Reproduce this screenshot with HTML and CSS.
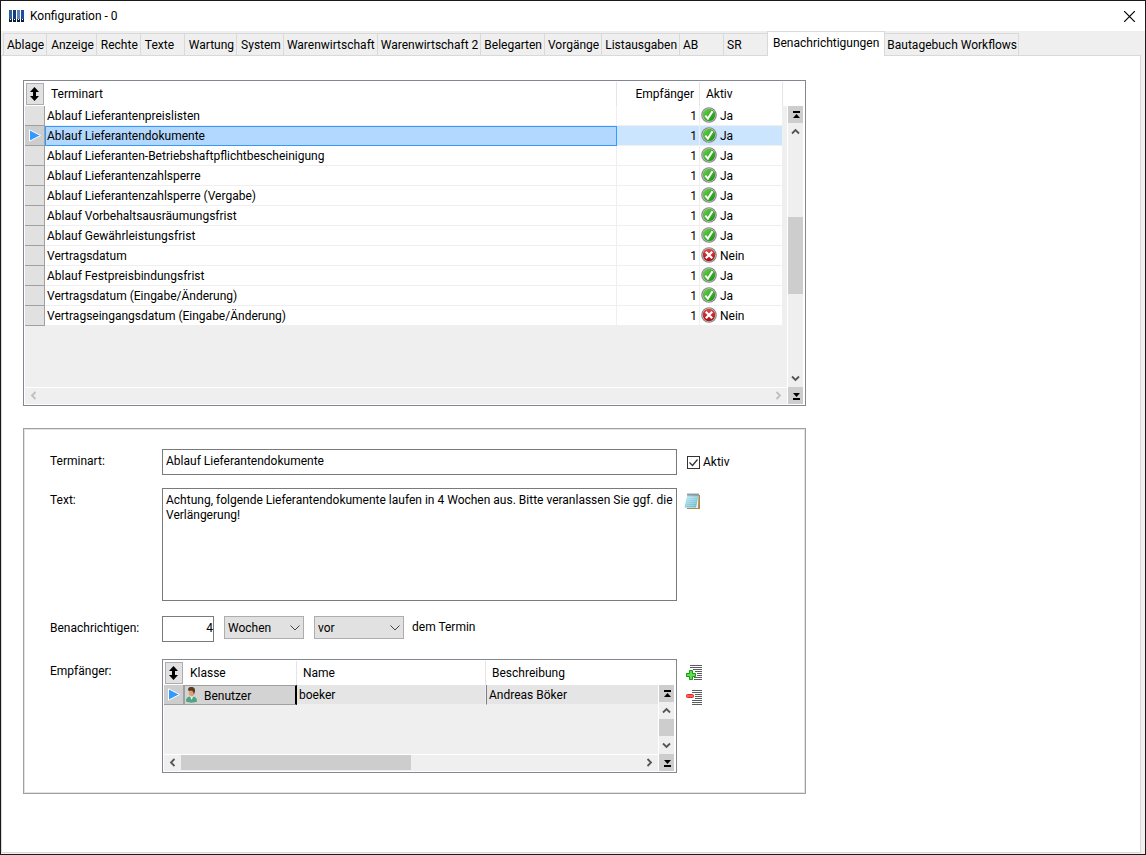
FILE: index.html
```
<!DOCTYPE html>
<html lang="de">
<head>
    <meta charset="UTF-8">
    <meta name="viewport" content="width=device-width, initial-scale=1.0">
    <title>Konfiguration - 0</title>
    <link rel="stylesheet" href="styles.css">
</head>
<body>
    <!-- Symbole -->
    <svg class="symbols" aria-hidden="true">
        <defs>
            <linearGradient id="g-green" x1="0" y1="0" x2="1" y2="1">
                <stop offset="0" stop-color="#6fd24f"/>
                <stop offset="1" stop-color="#15900f"/>
            </linearGradient>
            <linearGradient id="g-red" x1="0" y1="0" x2="0" y2="1">
                <stop offset="0" stop-color="#e04a4a"/>
                <stop offset="1" stop-color="#a80d14"/>
            </linearGradient>
            <linearGradient id="g-pad" x1="0" y1="0" x2="1" y2="1">
                <stop offset="0" stop-color="#c4eaf3"/>
                <stop offset="1" stop-color="#5fb4cd"/>
            </linearGradient>
        </defs>
        <symbol id="i-ok" viewBox="0 0 16 16">
            <circle cx="8" cy="8" r="7.8" fill="#858585"/>
            <circle cx="8" cy="8" r="6.7" fill="#d2d2d2"/>
            <circle cx="8" cy="8" r="6.2" fill="url(#g-green)"/>
            <path d="M4.3 8.6l2.6 3 4.600-7.400" fill="none" stroke="#fff" stroke-width="2"/>
        </symbol>
        <symbol id="i-no" viewBox="0 0 16 16">
            <circle cx="8" cy="8" r="7.8" fill="#858585"/>
            <circle cx="8" cy="8" r="6.7" fill="#d2d2d2"/>
            <circle cx="8" cy="8" r="6.2" fill="url(#g-red)"/>
            <path d="M4.8 4.800l6.400 6.400M11.200 4.800l-6.400 6.400" fill="none" stroke="#fff" stroke-width="2.3"/>
        </symbol>
        <symbol id="i-sort" viewBox="0 0 10 14">
            <path d="M4.500 0L9 5H6v4h3l-4.500 5L0 9h3V5H0z" fill="#000"/>
        </symbol>
        <symbol id="i-current" viewBox="0 0 13 13">
            <path d="M1.500.8v11.400L12.500 6.500z" fill="#3399ff" stroke="#fff"/>
        </symbol>
        <symbol id="i-up" viewBox="0 0 9 9"><path d="M1 6.500l3.500-3.500L8 6.500" fill="none" stroke="currentColor" stroke-width="1.8"/></symbol>
        <symbol id="i-down" viewBox="0 0 9 9"><path d="M1 2.500L4.500 6 8 2.500" fill="none" stroke="currentColor" stroke-width="1.8"/></symbol>
        <symbol id="i-left" viewBox="0 0 9 9"><path d="M6.500 1L3 4.500 6.500 8" fill="none" stroke="currentColor" stroke-width="1.8"/></symbol>
        <symbol id="i-right" viewBox="0 0 9 9"><path d="M2.500 1L6 4.500 2.500 8" fill="none" stroke="currentColor" stroke-width="1.8"/></symbol>
        <symbol id="i-first" viewBox="0 0 9 9"><path d="M2 1h7v2H2zM5.500 4L9 8H2z" fill="#000"/></symbol>
        <symbol id="i-last" viewBox="0 0 9 9"><path d="M2 7h7v2H2zM5.500 6L9 2H2z" fill="#000"/></symbol>
    </svg>

    <div class="window">
        <header class="titlebar">
            <svg class="app-icon" viewBox="0 0 16 12">
                <path d="M0 0h3v12H0z" fill="#2c5f9e"/>
                <path d="M4 0h3v12H4z" fill="#17397f"/>
                <path d="M8 0h3v12H8z" fill="#5b83bd"/>
                <path d="M12 0h3v12h-3z" fill="#1c4fa0"/>
                <path d="M0 9h3v3H0zM4 9h3v3H4zM8 9h3v3H8zM12 9h3v3h-3z" fill="#0d1b33"/>
                <path d="M1 9h1v1H1zM5 9h1v1H5zM9 9h1v1H9zM13 9h1v1h-1z" fill="#fff"/>
            </svg>
            <h1>Konfiguration - 0</h1>
            <button class="close" aria-label="Schließen">
                <svg viewBox="0 0 10 10"><path d="M0 0l10 10M10 0L0 10" stroke="#000" stroke-width="1.1"/></svg>
            </button>
        </header>

        <nav class="tabs">
            <button>Ablage</button>
            <button>Anzeige</button>
            <button>Rechte</button>
            <button>Texte</button>
            <button>Wartung</button>
            <button>System</button>
            <button>Warenwirtschaft</button>
            <button>Warenwirtschaft 2</button>
            <button>Belegarten</button>
            <button>Vorgänge</button>
            <button>Listausgaben</button>
            <button>AB</button>
            <button>SR</button>
            <button class="active">Benachrichtigungen</button>
            <button>Bautagebuch Workflows</button>
        </nav>

        <main class="page">
            <!-- Liste der Terminarten -->
            <section class="grid">
                <div class="grid-body">
                    <table class="dates">
                        <colgroup><col class="c-mark"><col><col class="c-count"><col class="c-active"></colgroup>
                        <thead>
                            <tr>
                                <th class="mark"><button aria-label="Sortierung"><svg><use href="#i-sort"/></svg></button></th>
                                <th>Terminart</th>
                                <th class="num">Empfänger</th>
                                <th>Aktiv</th>
                            </tr>
                        </thead>
                        <tbody>
                            <tr><td class="mark"></td><td>Ablauf Lieferantenpreislisten</td><td class="num">1</td><td class="flag"><svg class="state"><use href="#i-ok"/></svg>Ja</td></tr>
                            <tr class="selected"><td class="mark"><svg><use href="#i-current"/></svg></td><td class="focus">Ablauf Lieferantendokumente</td><td class="num">1</td><td class="flag"><svg class="state"><use href="#i-ok"/></svg>Ja</td></tr>
                            <tr><td class="mark"></td><td>Ablauf Lieferanten-Betriebshaftpflichtbescheinigung</td><td class="num">1</td><td class="flag"><svg class="state"><use href="#i-ok"/></svg>Ja</td></tr>
                            <tr><td class="mark"></td><td>Ablauf Lieferantenzahlsperre</td><td class="num">1</td><td class="flag"><svg class="state"><use href="#i-ok"/></svg>Ja</td></tr>
                            <tr><td class="mark"></td><td>Ablauf Lieferantenzahlsperre (Vergabe)</td><td class="num">1</td><td class="flag"><svg class="state"><use href="#i-ok"/></svg>Ja</td></tr>
                            <tr><td class="mark"></td><td>Ablauf Vorbehaltsausräumungsfrist</td><td class="num">1</td><td class="flag"><svg class="state"><use href="#i-ok"/></svg>Ja</td></tr>
                            <tr><td class="mark"></td><td>Ablauf Gewährleistungsfrist</td><td class="num">1</td><td class="flag"><svg class="state"><use href="#i-ok"/></svg>Ja</td></tr>
                            <tr><td class="mark"></td><td>Vertragsdatum</td><td class="num">1</td><td class="flag"><svg class="state"><use href="#i-no"/></svg>Nein</td></tr>
                            <tr><td class="mark"></td><td>Ablauf Festpreisbindungsfrist</td><td class="num">1</td><td class="flag"><svg class="state"><use href="#i-ok"/></svg>Ja</td></tr>
                            <tr><td class="mark"></td><td>Vertragsdatum (Eingabe/Änderung)</td><td class="num">1</td><td class="flag"><svg class="state"><use href="#i-ok"/></svg>Ja</td></tr>
                            <tr><td class="mark"></td><td>Vertragseingangsdatum (Eingabe/Änderung)</td><td class="num">1</td><td class="flag"><svg class="state"><use href="#i-no"/></svg>Nein</td></tr>
                        </tbody>
                    </table>
                </div>
                <div class="hscroll disabled">
                    <button aria-label="Links"><svg><use href="#i-left"/></svg></button>
                    <div class="track"></div>
                    <button aria-label="Rechts"><svg><use href="#i-right"/></svg></button>
                </div>
                <div class="vscroll">
                    <button class="end" aria-label="Anfang"><svg><use href="#i-first"/></svg></button>
                    <button aria-label="Hoch"><svg><use href="#i-up"/></svg></button>
                    <div class="track track-dates"><div class="thumb"></div></div>
                    <button aria-label="Runter"><svg><use href="#i-down"/></svg></button>
                    <button class="end" aria-label="Ende"><svg><use href="#i-last"/></svg></button>
                </div>
            </section>

            <!-- Details -->
            <form class="details">
                <label for="kind">Terminart:</label>
                <input type="text" id="kind" value="Ablauf Lieferantendokumente">
                <div class="side">
                    <label class="check"><input type="checkbox" checked>Aktiv</label>
                </div>

                <label for="text">Text:</label>
                <textarea id="text">Achtung, folgende Lieferantendokumente laufen in 4 Wochen aus. Bitte veranlassen Sie ggf. die Verlängerung!</textarea>
                <div class="side">
                    <button type="button" aria-label="Text bearbeiten">
                        <svg viewBox="0 0 16 17">
                            <path d="M4 2h12v14H3z" fill="#a68b52"/>
                            <path d="M4 2h10.500L14 15H3z" fill="#f5f0dd"/>
                            <path d="M3.500 1.500H14.500L12 14.500H.5z" fill="url(#g-pad)"/>
                            <path d="M3.500 4.500h9.500M3 6.500h9.500M2.700 8.500h9.500M2.300 10.500h9.500M2 12.500h9.500" stroke="#fff" stroke-opacity=".35" stroke-width=".7"/>
                            <path d="M4 .5v2M6 .5v2M8 .5v2M10 .5v2M12 .5v2M14 .5v2" stroke="#333" stroke-width=".9"/>
                        </svg>
                    </button>
                </div>

                <label for="amount">Benachrichtigen:</label>
                <div class="notify">
                    <input type="text" id="amount" value="4">
                    <select class="unit" aria-label="Einheit"><option>Wochen</option></select>
                    <select class="relation" aria-label="Bezug"><option>vor</option></select>
                    <span>dem Termin</span>
                </div>
                <div class="side"></div>

                <span class="label">Empfänger:</span>
                <div class="grid">
                    <div class="grid-body">
                        <table class="users">
                            <colgroup><col class="c-mark"><col class="c-class"><col class="c-name"><col></colgroup>
                            <thead>
                                <tr>
                                    <th class="mark"><button type="button" aria-label="Sortierung"><svg><use href="#i-sort"/></svg></button></th>
                                    <th>Klasse</th>
                                    <th>Name</th>
                                    <th>Beschreibung</th>
                                </tr>
                            </thead>
                            <tbody>
                                <tr>
                                    <td class="mark"><svg><use href="#i-current"/></svg></td>
                                    <td class="class-cell">
                                        <svg class="state" viewBox="0 0 16 16">
                                            <path d="M1 14.500c0-3 1-4.500 4-5h3c3 .5 4 2 4 5-3 1.500-8 1.500-11 0z" fill="#4fa583"/>
                                            <path d="M5 9l1.500 4L8.500 9z" fill="#e9f4ef"/>
                                            <path d="M3.500 2.500h5.500v5L7.500 9.500H6L4 7.500z" fill="#d9a273"/>
                                            <path d="M3 3C3 .5 4.500 0 6.500 0s4 1 3.500 4.500L9 7.500 8 4.500 6 3.500 4 4z" fill="#5a3a22"/>
                                        </svg>Benutzer
                                    </td>
                                    <td>boeker</td>
                                    <td class="descr">Andreas Böker</td>
                                </tr>
                            </tbody>
                        </table>
                    </div>
                    <div class="hscroll">
                        <button type="button" aria-label="Links"><svg><use href="#i-left"/></svg></button>
                        <div class="track"><div class="thumb"></div></div>
                        <button type="button" aria-label="Rechts"><svg><use href="#i-right"/></svg></button>
                    </div>
                    <div class="vscroll">
                        <button type="button" class="end" aria-label="Anfang"><svg><use href="#i-first"/></svg></button>
                        <button type="button" aria-label="Hoch"><svg><use href="#i-up"/></svg></button>
                        <div class="track"><div class="thumb"></div></div>
                        <button type="button" aria-label="Runter"><svg><use href="#i-down"/></svg></button>
                        <button type="button" class="end" aria-label="Ende"><svg><use href="#i-last"/></svg></button>
                    </div>
                </div>
                <div class="side side-list">
                    <button type="button" aria-label="Empfänger hinzufügen">
                        <svg viewBox="0 0 16 17">
                            <path d="M4 1.500h12M4 3.500h12M7 5.500h9M9 7.500h7M11 9.500h5M11 11.500h5M8 13.500h8M8 15.500h8" stroke="#5c5c5c"/>
                            <path d="M3.500 6.500h3v3h3v3h-3v3h-3v-3h-3v-3h3z" fill="#5fe04a" stroke="#17981a"/>
                        </svg>
                    </button>
                    <button type="button" aria-label="Empfänger entfernen">
                        <svg viewBox="0 0 16 17">
                            <path d="M6 1.500h10M6 3.500h10M9 5.500h7M9 7.500h7M9 9.500h7M6 11.500h10M6 13.500h10M6 15.500h10" stroke="#5c5c5c"/>
                            <rect x=".5" y="5.500" width="7" height="3" rx="1" fill="#ff5a50" stroke="#e02828"/>
                        </svg>
                    </button>
                </div>
            </form>
        </main>
    </div>
</body>
</html>
```
FILE: styles.css
```
* {
    box-sizing: border-box;
}

body {
    margin: 0;
    font-family: Roboto, "Noto Sans", sans-serif;
    font-size: 12px;
    line-height: 15px;
    color: #000;
}

button, input, select, textarea {
    font: inherit;
    color: inherit;
    margin: 0;
    border-radius: 0;
    outline: none;
}

button {
    display: block;
    padding: 0;
    border: none;
    background: none;
}

svg {
    display: block;
}

.symbols {
    position: absolute;
    width: 0;
    height: 0;
}

.window {
    display: flex;
    flex-direction: column;
    min-height: 100vh;
    border: 1px solid #1a1a1a;
    background-color: #efefef;
}

/* Titelleiste */
.titlebar {
    display: flex;
    align-items: center;
    height: 30px;
    padding: 0 10px 0 8px;
    background-color: #fff;
}

.titlebar h1 {
    flex: 1;
    margin: 0 0 0 5px;
    font-size: 12px;
    font-weight: normal;
}

.app-icon {
    width: 16px;
    height: 12px;
}

.close svg {
    width: 11px;
    height: 11px;
}

/* Reiter */
.tabs {
    display: flex;
    align-items: flex-end;
    height: 24px;
    padding-left: 2px;
}

.tabs button {
    min-width: 44px;
    height: 22px;
    padding: 1px 2px 0 4px;
    border: 1px solid #d9d9d9;
    border-width: 1px 1px 0 0;
    text-align: left;
    white-space: nowrap;
}

.tabs button:nth-child(n+7) {
    padding: 1px 2px 0 3px;
}

.tabs button:first-child {
    padding-left: 3px;
    border-left-width: 1px;
}

.tabs button:last-child {
    padding: 1px 1px 0 2px;
}

.tabs button.active {
    height: 25px;
    margin: 0 0 -1px -1px;
    padding: 0 5px 2px;
    border-left-width: 1px;
    background-color: #fff;
    z-index: 1;
}

.page {
    flex: 1;
    margin: 0 4px 1px 0;
    padding: 24px 21px;
    border: 1px solid #d9d9d9;
    background-color: #fff;
}

/* Tabellen mit Bildlaufleisten */
.grid {
    display: grid;
    grid-template-columns: 1fr 17px;
    grid-template-rows: 1fr 17px;
    max-width: 783px;
    height: 326px;
    padding: 1px;
    border: 1px solid #828790;
    background-color: #fff;
}

.grid-body {
    background: linear-gradient(#fff 24px, #efefef 24px);
    overflow: hidden;
}

table {
    width: 100%;
    table-layout: fixed;
    border-collapse: separate;
    border-spacing: 0;
}

.dates {
    width: calc(100% - 4px);
}

.c-mark { width: 20px; }
.c-count { width: 83px; }
.c-active { width: 83px; }
.c-class { width: 113px; }
.c-name { width: 189px; }

th {
    height: 24px;
    padding: 0 5px 0 6px;
    border-right: 1px solid #e5e5e5;
    font-weight: normal;
    text-align: left;
}

td {
    height: 20px;
    padding: 2px 2px 0;
    border-right: 1px solid #efefef;
    border-bottom: 1px solid #efefef;
    background-color: #fff;
    white-space: nowrap;
}

.num {
    text-align: right;
}

th.mark {
    padding: 1px;
    border: none;
}

.mark button {
    display: flex;
    align-items: center;
    justify-content: center;
    width: 18px;
    height: 22px;
    border: 1px solid #adadad;
    background-color: #e1e1e1;
}

.mark button svg {
    width: 10px;
    height: 14px;
}

td.mark {
    padding: 0 3px;
    border-color: #a0a0a0;
    background-color: #e1e1e1;
}

.mark svg {
    width: 13px;
    height: 13px;
}

td.flag {
    padding: 0 1px;
}

.state {
    display: inline-block;
    width: 16px;
    height: 16px;
    margin-right: 3px;
    vertical-align: -3px;
}

.selected td {
    background-color: #cce5ff;
}

.selected .mark, .users td.mark {
    background-color: #cdcdcd;
}

.selected .focus {
    padding: 0 1px;
    border: 1px solid #3399ff;
    background-color: #b2d8ff;
}

.users td {
    background-color: #e5e5e5;
}

.users .class-cell {
    padding: 0;
    border: 1px solid #a0a0a0;
    border-right: 2px solid #000;
    background-color: #d3d3d3;
}

.users .descr {
    border-left: 1px solid #808080;
    border-right: none;
}

.users th:last-child {
    border-right: none;
}

.hscroll, .vscroll {
    display: flex;
    color: #555;
}

.hscroll {
    grid-area: 2 / 1;
    border-top: 1px solid #fff;
    background-color: #efefef;
}

.hscroll.disabled {
    color: #bfbfbf;
}

.vscroll {
    grid-area: 1 / 2 / 3 / 2;
    flex-direction: column;
    padding: 24px 1px 0;
}

.hscroll button, .vscroll button {
    display: flex;
    align-items: center;
    justify-content: center;
    width: 17px;
    height: 15px;
}

.vscroll button {
    width: 15px;
    height: 17px;
    background-color: #efefef;
}

.vscroll .end {
    background-color: #cdcdcd;
}

.hscroll svg, .vscroll svg {
    width: 9px;
    height: 9px;
}

.track {
    flex: 1;
    background-color: #efefef;
}

.hscroll .thumb {
    width: 50%;
    height: 15px;
    background-color: #cdcdcd;
}

.vscroll .thumb {
    height: 17px;
    background-color: #cdcdcd;
}

.vscroll .track-dates {
    padding-top: 77px;
}

.vscroll .track-dates .thumb {
    height: 77px;
}

/* Detailformular */
.details {
    display: grid;
    grid-template-columns: 112px minmax(0, 515px) 1fr;
    row-gap: 13px;
    max-width: 783px;
    margin-top: 22px;
    padding: 20px 26px;
    border: 1px solid #a0a0a0;
    box-shadow: inset 0 0 0 1px #e3e3e3;
}

.details > label, .label {
    padding-top: 5px;
}

.details input[type="text"], textarea {
    width: 100%;
    height: 26px;
    padding: 0 3px 2px;
    border: 1px solid #7a7a7a;
    background-color: #fff;
}

.details textarea {
    display: block;
    height: 113px;
    margin-bottom: 2px;
    padding: 4px 0 0 3px;
    resize: none;
}

.side {
    padding-left: 7px;
}

.side-list {
    padding-left: 9px;
}

.side svg {
    width: 16px;
    height: 17px;
}

.side button {
    margin: 5px 0 8px;
}

.check {
    display: flex;
    align-items: center;
    gap: 3px;
    height: 26px;
    padding-left: 3px;
}

.check input {
    appearance: none;
    width: 13px;
    height: 13px;
    border: 1px solid #333;
    background: #fff url("data:image/svg+xml,%3Csvg xmlns='http://www.w3.org/2000/svg' viewBox='0 0 11 11'%3E%3Cpath d='M1.500 5.500l3 3 5-6' fill='none' stroke='%23333' stroke-width='1.300'/%3E%3C/svg%3E");
}

.notify {
    display: flex;
    align-items: flex-start;
    margin-bottom: 4px;
}

.details .notify input {
    width: 52px;
    padding-right: 0;
    text-align: right;
}

.notify select {
    appearance: none;
    height: 23px;
    margin-left: 10px;
    padding: 1px 3px 0;
    border: 1px solid #adadad;
    background: #e1e1e1 url("data:image/svg+xml,%3Csvg xmlns='http://www.w3.org/2000/svg' width='10' height='6'%3E%3Cpath d='M.5.5L5 5 9.500.5' fill='none' stroke='%23444'/%3E%3C/svg%3E") no-repeat right 3px center;
}

.unit {
    width: 80px;
}

.relation {
    width: 90px;
}

.notify span {
    margin: 4px 0 0 8px;
}

.details .grid {
    height: 114px;
}
```
